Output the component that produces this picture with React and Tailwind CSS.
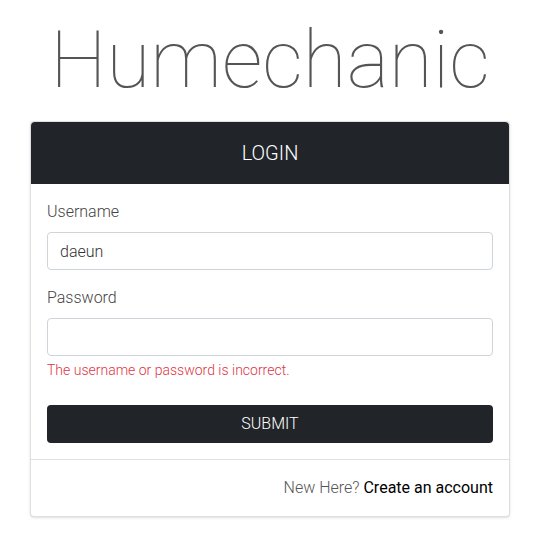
export default function App() {
  return (
    <div className="min-h-screen bg-white font-['Roboto',sans-serif] font-light text-[#212529]">
      <div className="pt-[12px] w-[480px] ml-[30px]">
        <h1 className="text-center text-[80px] leading-[96px] font-thin text-[#555] mb-[13px]">
          Humechanic
        </h1>

        <div className="border border-black/[0.125] rounded shadow-sm bg-white">
          <div className="bg-[#212529] text-white text-center text-[20px] leading-[30px] py-[16px] rounded-t">
            LOGIN
          </div>

          <div className="p-4">
            <div className="mb-4">
              <label className="block text-base leading-6 mb-2 text-[#444]">Username</label>
              <input
                type="text"
                defaultValue="daeun"
                className="block w-full h-[38px] px-3 text-base text-[#333] border border-[#ced4da] rounded font-light outline-none"
              />
            </div>
            <div>
              <label className="block text-base leading-6 mb-2 text-[#444]">Password</label>
              <input
                type="password"
                className="block w-full h-[38px] px-3 text-base border border-[#ced4da] rounded outline-none"
              />
              <p className="mt-1 text-sm leading-[21px] text-[#dc3545]">
                The username or password is incorrect.
              </p>
            </div>
            <button className="mt-6 w-full h-[38px] bg-[#212529] text-white text-base rounded font-light">
              SUBMIT
            </button>
          </div>

          <div className="border-t border-black/[0.125] px-4 py-4 text-right leading-6">
            <span className="text-[#555]">New Here? </span>
            <a className="text-black font-normal">Create an account</a>
          </div>
        </div>
      </div>
    </div>
  );
}
